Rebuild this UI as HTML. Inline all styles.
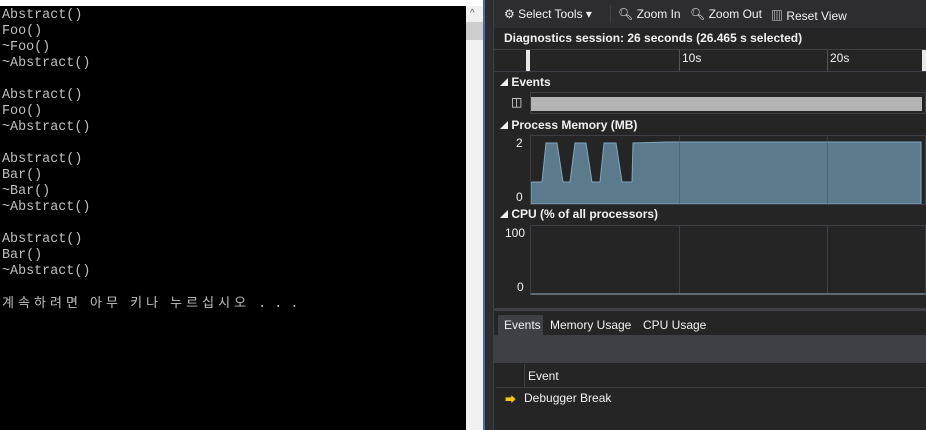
<!DOCTYPE html>
<html><head><meta charset="utf-8"><style>
*{margin:0;padding:0;box-sizing:border-box}
body{width:926px;height:430px;overflow:hidden;background:#252526;position:relative;font-family:"Liberation Sans","Noto Sans CJK KR",sans-serif}
.a{position:absolute}
#con{left:0;top:6px;width:466px;height:424px;background:#000;color:#c0c0c0;font-family:"Liberation Mono","Noto Sans CJK KR",monospace;font-size:13.4px;line-height:16px;white-space:pre;padding-left:2px;padding-top:2px}
#con i{font-style:normal;display:inline-block;width:16px;font-size:13px}
.t{color:#f1f1f1;font-size:12px}
.b{font-weight:bold}
.tri{font-size:8px;vertical-align:1px;font-weight:normal}
</style></head><body>
<div class="a" style="left:0;top:0;width:483px;height:6px;background:#fff"></div>
<div id="con" class="a">Abstract()
Foo()
~Foo()
~Abstract()

Abstract()
Foo()
~Abstract()

Abstract()
Bar()
~Bar()
~Abstract()

Abstract()
Bar()
~Abstract()

<i>계</i><i>속</i><i>하</i><i>려</i><i>면</i> <i>아</i><i>무</i> <i>키</i><i>나</i> <i>누</i><i>르</i><i>십</i><i>시</i><i>오</i> . . .</div>
<div class="a" style="left:466px;top:6px;width:17px;height:424px;background:#f0f0f0"></div>
<div class="a" style="left:466px;top:22px;width:17px;height:18px;background:#cdcdcd"></div>
<div class="a t" style="left:470px;top:8px;color:#606060;font-size:10px">^</div>
<div class="a" style="left:483px;top:0;width:2px;height:430px;background:#3e6fa8"></div>
<div class="a" style="left:485px;top:0;width:9px;height:430px;background:#2d2d30"></div>
<div class="a" style="left:493px;top:0;width:1px;height:430px;background:#3f3f46"></div>
<!-- toolbar -->
<div class="a" style="left:494px;top:0;width:432px;height:28px;background:#2d2d30"></div>
<div class="a t" style="left:504px;top:7px">⚙ Select Tools ▾</div>
<div class="a" style="left:610px;top:5px;width:1px;height:18px;background:#3f3f46"></div>
<div class="a t" style="left:618px;top:7px">🔍︎ Zoom In</div>
<div class="a t" style="left:690px;top:7px">🔍︎ Zoom Out</div>
<div class="a t" style="left:771px;top:7px">▥ Reset View</div>
<div class="a t b" style="left:504px;top:31px">Diagnostics session: 26 seconds (26.465 s selected)</div>
<!-- ruler -->
<div class="a" style="left:494px;top:49px;width:432px;height:1px;background:#3f3f46"></div>
<div class="a" style="left:526px;top:50px;width:4px;height:21px;background:#e8e8e8"></div>
<div class="a" style="left:679px;top:50px;width:1px;height:21px;background:#555"></div>
<div class="a" style="left:827px;top:50px;width:1px;height:21px;background:#555"></div>
<div class="a" style="left:922px;top:50px;width:4px;height:21px;background:#e8e8e8"></div>
<div class="a t" style="left:682px;top:51px">10s</div>
<div class="a t" style="left:830px;top:51px">20s</div>
<div class="a" style="left:494px;top:71px;width:432px;height:1px;background:#3f3f46"></div>
<!-- events -->
<div class="a t b" style="left:500px;top:75px"><span class="tri">◢</span> Events</div>
<div class="a" style="left:530px;top:92px;width:396px;height:22px;border:1px solid #3f3f46"></div>
<div class="a" style="left:531px;top:97px;width:391px;height:14px;background:#b4b4b4"></div>
<div class="a t" style="left:511px;top:95px">◫</div>
<!-- memory -->
<div class="a t b" style="left:500px;top:118px"><span class="tri">◢</span> Process Memory (MB)</div>
<div class="a t" style="left:516px;top:136px">2</div>
<div class="a t" style="left:516px;top:190px">0</div>
<div class="a" style="left:530px;top:135px;width:396px;height:70px;border:1px solid #3f3f46"></div>
<svg class="a" style="left:531px;top:136px" width="395" height="68"><path d="M0 68 L0 47 L1 46 L11 46 L15 7 L26 7 L32 46 L39 46 L44 7 L55 7 L61 46 L69 46 L73 7 L85 7 L91 46 L101 46 L102 7 L135 6 L390 6 L390 68Z" fill="#5b7a8c" stroke="#7fa9c2" stroke-width="1"/></svg>
<!-- cpu -->
<div class="a t b" style="left:500px;top:207px"><span class="tri">◢</span> CPU (% of all processors)</div>
<div class="a t" style="left:505px;top:226px">100</div>
<div class="a t" style="left:517px;top:280px">0</div>
<div class="a" style="left:530px;top:225px;width:396px;height:70px;border:1px solid #3f3f46;border-bottom:2px solid #5b6a74"></div>
<div class="a" style="left:679px;top:226px;width:1px;height:67px;background:#3f3f46"></div>
<div class="a" style="left:827px;top:226px;width:1px;height:67px;background:#3f3f46"></div>
<div class="a" style="left:679px;top:136px;width:1px;height:68px;background:rgba(80,80,90,.5)"></div>
<div class="a" style="left:827px;top:136px;width:1px;height:68px;background:rgba(80,80,90,.5)"></div>
<div class="a" style="left:494px;top:308px;width:432px;height:3px;background:#3f3f46"></div>
<!-- tabs -->
<div class="a" style="left:498px;top:315px;width:45px;height:21px;background:#3f3f46"></div>
<div class="a t" style="left:504px;top:318px">Events</div>
<div class="a t" style="left:550px;top:318px">Memory Usage</div>
<div class="a t" style="left:643px;top:318px">CPU Usage</div>
<div class="a" style="left:494px;top:335px;width:432px;height:28px;background:#3f3f46"></div>
<div class="a" style="left:524px;top:364px;width:1px;height:23px;background:#3f3f46"></div>
<div class="a t" style="left:528px;top:369px">Event</div>
<div class="a" style="left:496px;top:387px;width:430px;height:1px;background:#3f3f46"></div>
<div class="a" style="left:505px;top:391px;color:#f5c518;font-size:11px">➡</div>
<div class="a t" style="left:524px;top:391px">Debugger Break</div>
</body></html>
